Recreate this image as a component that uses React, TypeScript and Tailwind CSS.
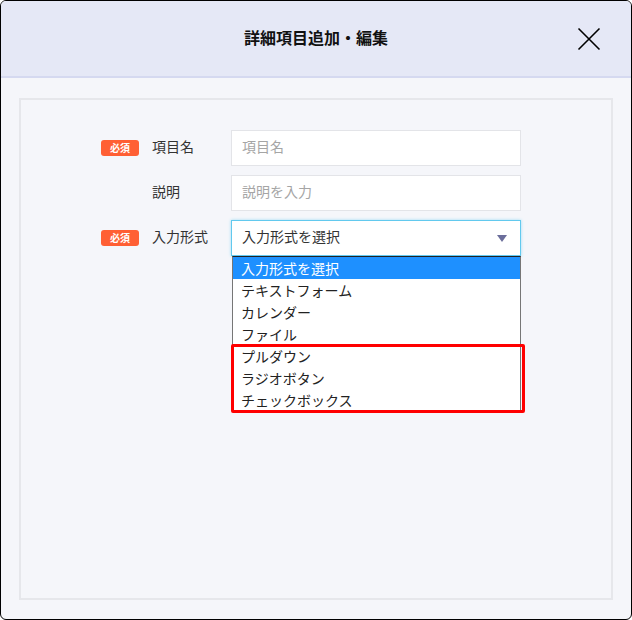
import React from 'react';

const options = ['入力形式を選択', 'テキストフォーム', 'カレンダー', 'ファイル', 'プルダウン', 'ラジオボタン', 'チェックボックス'];

function Badge() {
  return (
    <span className="flex h-[16px] w-[38px] items-center justify-center rounded-[3px] bg-[#ff5f34] text-[10px] font-bold leading-none text-white">
      必須
    </span>
  );
}

function Row({ label, required, children }: { label: string; required?: boolean; children: React.ReactNode }) {
  return (
    <div className="flex h-[36px] items-center">
      <div className="w-[38px]">{required && <Badge />}</div>
      <div className="ml-[13px] w-[79px] pb-[3px] text-[14px] text-[#333]">{label}</div>
      <div className="relative w-[290px]">{children}</div>
    </div>
  );
}

export default function App() {
  return (
    <div
      className="flex h-[620px] w-[632px] flex-col overflow-hidden rounded-[6px] border border-black bg-[#f5f6fa]"
      style={{ fontFamily: '"Noto Sans CJK JP", "Noto Sans", sans-serif' }}
    >
      <header className="relative flex h-[77px] shrink-0 items-center justify-center border-b-2 border-[#d5d9f0] bg-[#e5e8f6] pb-[4px]">
        <h1 className="text-[16px] font-bold text-[#111]">詳細項目追加・編集</h1>
        <button className="absolute right-[30px] top-[26px] text-black">
          <svg width="24" height="24" viewBox="0 0 24 24" fill="none" stroke="currentColor" strokeWidth="1.6">
            <path d="M1.5 1.5 L22.5 22.5 M22.5 1.5 L1.5 22.5" />
          </svg>
        </button>
      </header>

      <div className="flex-1 px-[18px] pb-[19px] pt-[20px]">
        <div className="h-full border-2 border-[#e6e7eb] pl-[80px] pt-[30px]">
          <div className="flex flex-col gap-[9px]">
            <Row label="項目名" required>
              <div className="flex h-[36px] items-center border border-[#e3e4e8] bg-white px-[10px] pb-[3px] text-[14px] text-[#a5a5a5]">項目名</div>
            </Row>
            <Row label="説明">
              <div className="flex h-[36px] items-center border border-[#e3e4e8] bg-white px-[10px] pb-[3px] text-[14px] text-[#a5a5a5]">説明を入力</div>
            </Row>
            <Row label="入力形式" required>
              <div className="flex h-[36px] items-center justify-between border border-[#62c9ee] bg-white pb-[3px] pl-[10px] pr-[13px] text-[14px] text-[#333] shadow-[0_0_3px_#9fdcf3]">
                <span>入力形式を選択</span>
                <svg width="10" height="7" viewBox="0 0 10 7" className="mt-[3px]">
                  <path d="M0 0 H10 L5 7 Z" fill="#6b6e9b" />
                </svg>
              </div>
              <div className="absolute left-[1px] top-[36px] w-[289px] border-x border-b border-[#767676] border-t border-t-[#222] bg-white">
                {options.map((o, i) => (
                  <div
                    key={o}
                    className={`flex h-[22px] items-center px-[8px] pb-[1px] text-[14px] leading-none ${i === 0 ? 'bg-[#1e90ff] text-white' : 'text-[#222]'}`}
                  >
                    {o}
                  </div>
                ))}
                <div className="pointer-events-none absolute left-[-2px] top-[87px] h-[69px] w-[294px] rounded-[2px] border-[3px] border-[#ff0000]" />
              </div>
            </Row>
          </div>
        </div>
      </div>
    </div>
  );
}
